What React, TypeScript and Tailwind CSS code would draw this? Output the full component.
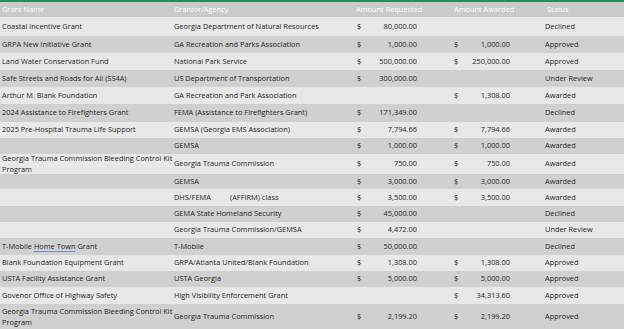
type Row = {
  name: string;
  grantor: string;
  req?: string;
  awd?: string;
  status: string;
  h: number;
};

const rows: Row[] = [
  { name: "Coastal Incentive Grant", grantor: "Georgia Department of Natural Resources", req: "80,000.00", status: "Declined", h: 19 },
  { name: "GRPA New Initiative Grant", grantor: "GA Recreation and Parks Association", req: "1,000.00", awd: "1,000.00", status: "Approved", h: 17 },
  { name: "Land Water Conservation Fund", grantor: "National Park Service", req: "500,000.00", awd: "250,000.00", status: "Approved", h: 17 },
  { name: "Safe Streets and Roads for All (SS4A)", grantor: "US Department of Transportation", req: "300,000.00", status: "Under Review", h: 17 },
  { name: "Arthur M. Blank Foundation", grantor: "GA Recreation and Park Association", awd: "1,308.00", status: "Awarded", h: 17 },
  { name: "2024 Assistance to Firefighters Grant", grantor: "FEMA (Assistance to Firefighters Grant)", req: "171,349.00", status: "Declined", h: 18 },
  { name: "2025 Pre-Hospital Trauma Life Support", grantor: "GEMSA (Georgia EMS Association)", req: "7,794.66", awd: "7,794.66", status: "Awarded", h: 16 },
  { name: "", grantor: "GEMSA", req: "1,000.00", awd: "1,000.00", status: "Awarded", h: 16 },
  { name: "Georgia Trauma Commission Bleeding Control Kit\nProgram", grantor: "Georgia Trauma Commission", req: "750.00", awd: "750.00", status: "Awarded", h: 20 },
  { name: "", grantor: "GEMSA", req: "3,000.00", awd: "3,000.00", status: "Awarded", h: 15 },
  { name: "", grantor: "DHS/FEMA          (AFFIRM) class", req: "3,500.00", awd: "3,500.00", status: "Awarded", h: 17 },
  { name: "", grantor: "GEMA State Homeland Security", req: "45,000.00", status: "Declined", h: 16 },
  { name: "", grantor: "Georgia Trauma Commission/GEMSA", req: "4,472.00", status: "Under Review", h: 16 },
  { name: "T-Mobile Home Town Grant", grantor: "T-Mobile", req: "50,000.00", status: "Declined", h: 17 },
  { name: "Blank Foundation Equipment Grant", grantor: "GRPA/Atlanta United/Blank Foundation", req: "1,308.00", awd: "1,308.00", status: "Approved", h: 16 },
  { name: "USTA Facility Assistance Grant", grantor: "USTA Georgia", req: "5,000.00", awd: "5,000.00", status: "Approved", h: 16 },
  { name: "Govenor Office of Highway Safety", grantor: "High Visibility Enforcement Grant", awd: "34,313.60", status: "Approved", h: 17 },
  { name: "Georgia Trauma Commission Bleeding Control Kit\nProgram", grantor: "Georgia Trauma Commission", req: "2,199.20", awd: "2,199.20", status: "Approved", h: 26 },
];

function Money({ v }: { v?: string }) {
  if (!v) return null;
  return (
    <div className="flex justify-between w-full">
      <span>$</span>
      <span>{v}</span>
    </div>
  );
}

function Name({ text }: { text: string }) {
  if (text.startsWith("T-Mobile")) {
    return (
      <span>
        T-Mobile{" "}
        <span className="underline decoration-[#6f8fd8] underline-offset-2">Home Town</span>{" "}
        Grant
      </span>
    );
  }
  return <span className="whitespace-pre-line leading-[9.5px]">{text}</span>;
}

export default function App() {
  return (
    <div
      className="w-[624px] h-[329px] overflow-hidden bg-[#e8e8e8] text-[#262626] text-[7.4px]"
      style={{ fontFamily: '"Open Sans", "Noto Sans", sans-serif' }}
    >
      <div className="h-[2px] bg-[#22915e]" />
      <div className="flex items-center h-[15px] bg-[#cacaca] text-white">
        <div className="w-[174px] pl-[2px]">Grant Name</div>
        <div className="w-[182px]">Grantor/Agency</div>
        <div className="w-[98px]">Amount Requested</div>
        <div className="w-[93px]">Amount Awarded</div>
        <div className="flex-1">Status</div>
      </div>
      {rows.map((r, i) => (
        <div
          key={i}
          className={`flex items-center ${i % 2 === 0 ? "bg-[#e8e8e8]" : "bg-[#d0d0d0]"}`}
          style={{ height: r.h }}
        >
          <div className="w-[174px] pl-[2px]">
            <Name text={r.name} />
          </div>
          <div className="w-[183px] whitespace-pre">{r.grantor}</div>
          <div className="w-[97px] pr-[37px]">
            <Money v={r.req} />
          </div>
          <div className="w-[91px] pr-[35px]">
            <Money v={r.awd} />
          </div>
          <div className="flex-1">{r.status}</div>
        </div>
      ))}
    </div>
  );
}
